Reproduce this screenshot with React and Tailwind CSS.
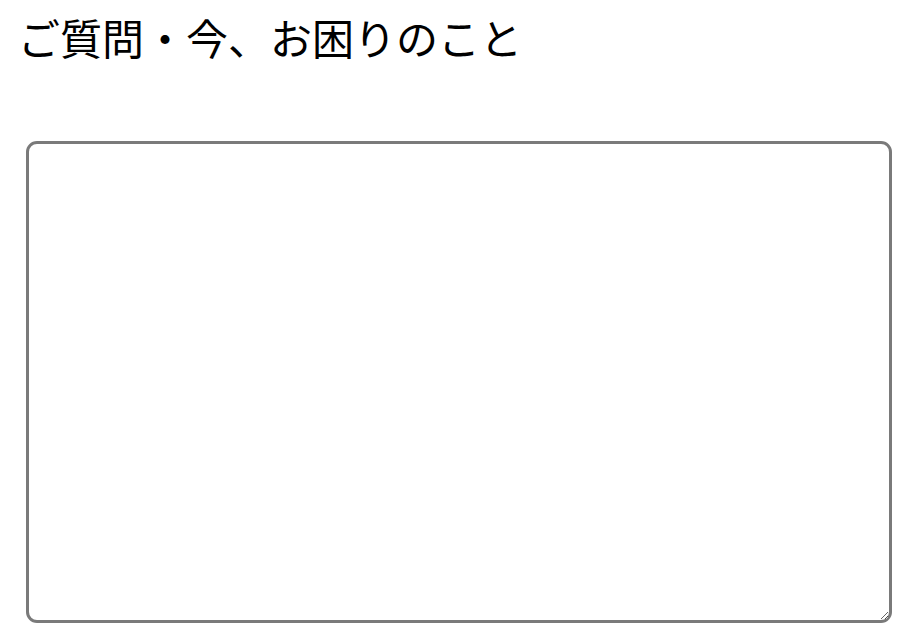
export default function App() {
  return (
    <div
      className="bg-white min-h-[634px] pl-[26px] pr-[24px]"
      style={{ fontFamily: '"Noto Sans CJK JP", "Noto Sans", sans-serif' }}
    >
      <h1 className="text-[42px] leading-[1.5] font-normal text-black -ml-[8px] pt-[5px]">
        ご質問・今、お困りのこと
      </h1>
      <textarea
        className="block mt-[73px] w-full h-[482px] border-[3px] border-[#7a7a7a] rounded-[11px] bg-white p-2 text-base outline-none"
      />
    </div>
  );
}
